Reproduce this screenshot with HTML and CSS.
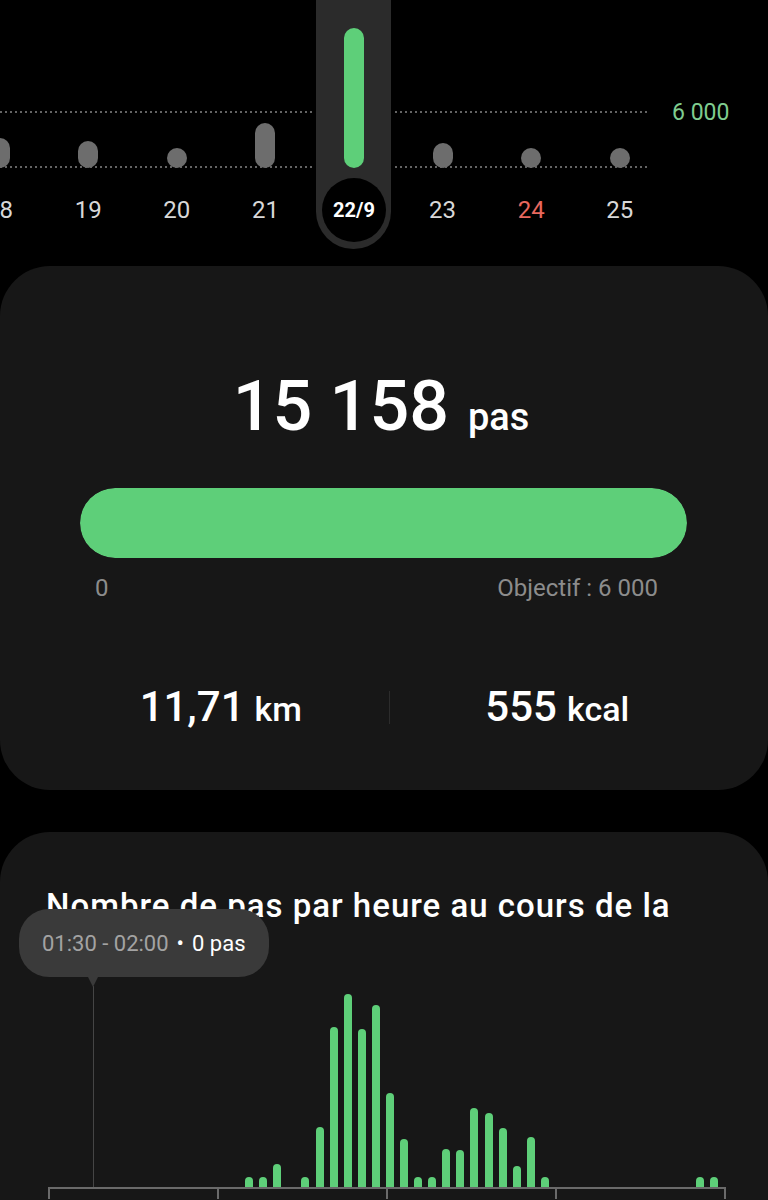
FILE: index.html
```html
<!DOCTYPE html>
<html lang="fr">
<head>
<meta charset="utf-8">
<title>Pas</title>
<link rel="stylesheet" href="styles.css">
</head>
<body>
<section class="week">
  <div class="days">
    <div class="guide guide-goal"></div>
    <div class="guide guide-base"></div>
    <div class="day"><div class="track"><span class="bar" style="height:30px"></span></div><span class="date">18</span></div>
    <div class="day"><div class="track"><span class="bar" style="height:27px"></span></div><span class="date">19</span></div>
    <div class="day"><div class="track"><span class="bar" style="height:20px"></span></div><span class="date">20</span></div>
    <div class="day"><div class="track"><span class="bar" style="height:45px"></span></div><span class="date">21</span></div>
    <div class="day sel">
      <div class="pill">
        <div class="track"><span class="bar" style="height:140px"></span></div>
        <span class="date">22/9</span>
      </div>
    </div>
    <div class="day"><div class="track"><span class="bar" style="height:25px"></span></div><span class="date">23</span></div>
    <div class="day"><div class="track"><span class="bar" style="height:20px"></span></div><span class="date holiday">24</span></div>
    <div class="day"><div class="track"><span class="bar" style="height:20px"></span></div><span class="date">25</span></div>
  </div>
  <span class="goal">6 000</span>
</section>

<section class="card summary">
  <div class="total"><span class="num">15 158</span><span class="unit">pas</span></div>
  <div class="progress"><div class="fill" style="width:100%"></div></div>
  <div class="scale"><span>0</span><span>Objectif : 6 000</span></div>
  <div class="stats">
    <div class="stat"><span class="v">11,71</span><span class="u">km</span></div>
    <div class="divider"></div>
    <div class="stat"><span class="v">555</span><span class="u">kcal</span></div>
  </div>
</section>

<section class="card hourly">
  <h2 class="title">Nombre de pas par heure au cours de la journée</h2>
  <div class="tip"><span class="time">01:30 - 02:00</span><span class="dot">•</span><span>0 pas</span></div>
  <div class="chart">
    <span class="cursor"></span>
    <span class="hb" style="height:0"></span><span class="hb" style="height:0"></span><span class="hb" style="height:0"></span><span class="hb" style="height:0"></span>
    <span class="hb" style="height:0"></span><span class="hb" style="height:0"></span><span class="hb" style="height:0"></span><span class="hb" style="height:0"></span>
    <span class="hb" style="height:0"></span><span class="hb" style="height:0"></span><span class="hb" style="height:0"></span><span class="hb" style="height:0"></span>
    <span class="hb" style="height:0"></span><span class="hb" style="height:0"></span><span class="hb" style="height:10px"></span><span class="hb" style="height:10px"></span>
    <span class="hb" style="height:23px"></span><span class="hb" style="height:0"></span><span class="hb" style="height:10px"></span><span class="hb" style="height:60px"></span>
    <span class="hb" style="height:160px"></span><span class="hb" style="height:193px"></span><span class="hb" style="height:158px"></span><span class="hb" style="height:182px"></span>
    <span class="hb" style="height:94px"></span><span class="hb" style="height:48px"></span><span class="hb" style="height:10px"></span><span class="hb" style="height:10px"></span>
    <span class="hb" style="height:38px"></span><span class="hb" style="height:37px"></span><span class="hb" style="height:79px"></span><span class="hb" style="height:74px"></span>
    <span class="hb" style="height:59px"></span><span class="hb" style="height:21px"></span><span class="hb" style="height:50px"></span><span class="hb" style="height:10px"></span>
    <span class="hb" style="height:0"></span><span class="hb" style="height:0"></span><span class="hb" style="height:0"></span><span class="hb" style="height:0"></span>
    <span class="hb" style="height:0"></span><span class="hb" style="height:0"></span><span class="hb" style="height:0"></span><span class="hb" style="height:0"></span>
    <span class="hb" style="height:0"></span><span class="hb" style="height:0"></span><span class="hb" style="height:10px"></span><span class="hb" style="height:10px"></span>
  </div>
  <div class="axis"></div>
  <div class="ticks"><span></span><span></span><span></span><span></span><span></span></div>
</section>
</body>
</html>
```
FILE: styles.css
```css
* { box-sizing: border-box; }

html, body {
  margin: 0;
  background: #000;
}

body {
  width: 768px;
  height: 1200px;
  overflow: hidden;
  font-family: Roboto, "Noto Sans", "Liberation Sans", sans-serif;
  color: #fff;
}

/* ---------- week strip ---------- */
.week {
  display: flex;
  height: 266px;
}

.days {
  position: relative;
  display: flex;
  flex: none;
  margin-left: -44.7px;
}

.guide {
  position: absolute;
  left: 44.7px;
  width: 650px;
  height: 2px;
  background: repeating-linear-gradient(90deg, #646464 0 2px, transparent 2px 5px);
  z-index: 0;
}

.guide-goal { top: 111px; }
.guide-base { top: 166px; }

.day {
  width: 88.6px;
  display: flex;
  flex-direction: column;
  align-items: center;
}

.track {
  position: relative;
  z-index: 2;
  height: 168px;
  display: flex;
  align-items: flex-end;
  justify-content: center;
}

.bar {
  width: 20px;
  border-radius: 10px;
  background: #6d6d6d;
}

.date {
  margin-top: 10px;
  height: 64px;
  display: flex;
  align-items: center;
  justify-content: center;
  font-size: 24px;
  color: #d8d8d8;
}

.date.holiday { color: #e8685e; }

.pill {
  position: relative;
  z-index: 1;
  width: 75px;
  margin-top: -40px;
  padding-top: 40px;
  padding-bottom: 7px;
  border-radius: 38px;
  background: #2b2b2b;
  box-shadow: 0 0 0 4px #000;
  display: flex;
  flex-direction: column;
  align-items: center;
}

.sel .bar { background: #5ecf79; }

.sel .date {
  width: 64px;
  border-radius: 50%;
  background: #000;
  font-size: 20px;
  font-weight: 700;
  color: #fff;
}

.goal {
  margin-left: 8px;
  margin-top: 99px;
  line-height: 28px;
  font-size: 23px;
  color: #7fcc8f;
}

/* ---------- cards ---------- */
.card {
  background: #171717;
  border-radius: 50px;
}

.summary {
  padding: 100px 0 58px;
}

.total {
  padding-right: 6px;
  text-align: center;
  font-size: 70px;
  line-height: 80px;
  font-weight: 500;
}

.unit {
  margin-left: 19px;
  font-size: 38px;
  line-height: 1;
}

.progress {
  height: 70px;
  margin: 42px 81px 0 80px;
  border-radius: 35px;
  background: #2f2f2f;
  overflow: hidden;
}

.fill {
  height: 100%;
  border-radius: 35px;
  background: #5ecf79;
}

.scale {
  display: flex;
  justify-content: space-between;
  margin: 15px 110px 0 95px;
  font-size: 24px;
  line-height: 30px;
  color: #8c8c8c;
}

.stats {
  display: grid;
  grid-template-columns: 1fr 1px 1fr;
  align-items: center;
  height: 50px;
  margin: 79px 43px 0 53px;
}

.stat {
  text-align: center;
  font-size: 42px;
  line-height: 50px;
  font-weight: 500;
}

.stat .u {
  margin-left: 10px;
  font-size: 34px;
  line-height: 1;
}

.divider {
  width: 1px;
  height: 33px;
  background: #2c2c2c;
}

/* ---------- hourly card ---------- */
.hourly {
  position: relative;
  margin-top: 42px;
  height: 420px;
  padding: 54px 44px 0 48px;
}

.title {
  margin: 0 0 0 -2px;
  font-size: 33px;
  letter-spacing: 1px;
  line-height: 40px;
  font-weight: 500;
}

.tip {
  position: absolute;
  left: 19px;
  top: 77px;
  z-index: 3;
  width: 250px;
  height: 68px;
  padding-left: 23px;
  border-radius: 30px;
  background: #3a3a3a;
  display: flex;
  align-items: center;
  font-size: 22px;
  color: #fff;
  white-space: nowrap;
}

.tip::after {
  content: "";
  position: absolute;
  left: 69px;
  top: 100%;
  border-left: 5px solid transparent;
  border-right: 5px solid transparent;
  border-top: 10px solid #3a3a3a;
}

.time { color: #a3a3a3; }

.dot { margin: 0 8px; }

.chart {
  position: relative;
  height: 201px;
  margin-top: 20px;
  display: grid;
  grid-template-columns: repeat(48, 1fr);
  align-items: end;
}

.cursor {
  position: absolute;
  left: 45px;
  top: 0;
  bottom: 0;
  width: 1px;
  background: #454545;
}

.hb {
  width: 8px;
  border-radius: 4px 4px 0 0;
  background: #5ecf79;
}

.axis {
  height: 2px;
  margin-right: -2px;
  background: #6a6a6a;
}

.ticks {
  display: flex;
  justify-content: space-between;
  margin-right: -2px;
}

.ticks span {
  width: 2px;
  height: 10px;
  background: #6a6a6a;
}
```
